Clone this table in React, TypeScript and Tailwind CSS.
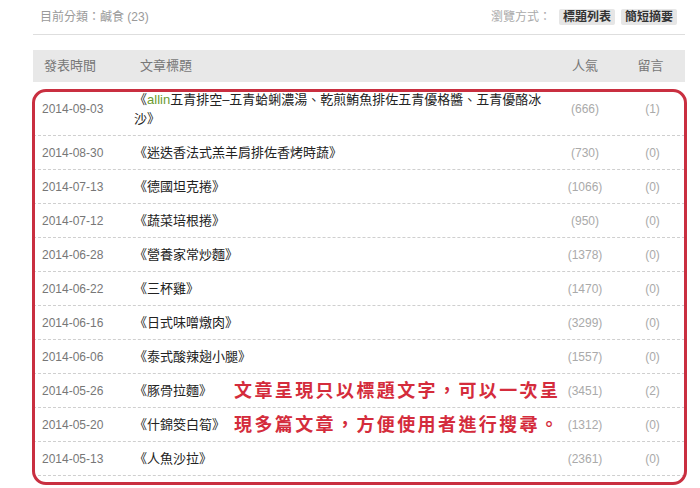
import React from "react";

interface Post {
  date: string;
  title: React.ReactNode;
  views: number;
  comments: number;
}

const posts: Post[] = [
  {
    date: "2014-09-03",
    title: (
      <>
        《<span className="text-[#6b9a2f]">allin</span>五青排空–五青蛤蜊濃湯、乾煎鮪魚排佐五青優格醬、五青優酪冰沙》
      </>
    ),
    views: 666,
    comments: 1,
  },
  { date: "2014-08-30", title: "《迷迭香法式羔羊肩排佐香烤時蔬》", views: 730, comments: 0 },
  { date: "2014-07-13", title: "《德國坦克捲》", views: 1066, comments: 0 },
  { date: "2014-07-12", title: "《蔬菜培根捲》", views: 950, comments: 0 },
  { date: "2014-06-28", title: "《營養家常炒麵》", views: 1378, comments: 0 },
  { date: "2014-06-22", title: "《三杯雞》", views: 1470, comments: 0 },
  { date: "2014-06-16", title: "《日式味噌燉肉》", views: 3299, comments: 0 },
  { date: "2014-06-06", title: "《泰式酸辣翅小腿》", views: 1557, comments: 0 },
  { date: "2014-05-26", title: "《豚骨拉麵》", views: 3451, comments: 2 },
  { date: "2014-05-20", title: "《什錦筊白筍》", views: 1312, comments: 0 },
  { date: "2014-05-13", title: "《人魚沙拉》", views: 2361, comments: 0 },
];

const font = "font-['Liberation_Sans','Noto_Sans_CJK_TC',sans-serif]";

export default function App() {
  return (
    <div className={`w-[700px] h-[488px] bg-white overflow-hidden ${font}`}>
      <div className="ml-[33px] w-[652px]">
        {/* top bar */}
        <div className="h-[35px] flex items-center justify-between border-b border-[#dedede] pl-[7px] pr-[8px]">
          <span className="text-[12px] text-[#9a9a9a]">目前分類：鹹食 (23)</span>
          <div className="flex items-center text-[12px]">
            <span className="text-[#aaa] mr-[8px]">瀏覽方式：</span>
            <span className="bg-[#e6e6e6] text-[#333] px-[4px] leading-[16px] rounded-[2px] font-bold">標題列表</span>
            <span className="bg-[#e6e6e6] text-[#333] px-[4px] leading-[16px] rounded-[2px] font-bold ml-[6px]">簡短摘要</span>
          </div>
        </div>

        {/* table */}
        <div className="relative mt-[15px]">
          <div className="h-[32px] bg-[#e8e8e8] flex items-center text-[13px] text-[#777]">
            <div className="w-[97px] pl-[11px]">發表時間</div>
            <div className="flex-1 pl-[10px]">文章標題</div>
            <div className="w-[70px] text-center">人氣</div>
            <div className="w-[65px] text-center pr-[4px]">留言</div>
          </div>

          {posts.map((p, i) => (
            <div
              key={p.date}
              className={`flex items-center border-b border-dashed border-[#cfcfcf] ${i === 0 ? "h-[54px]" : "h-[34px]"}`}
            >
              <div className="w-[97px] pl-[9px] text-[12px] text-[#777]">{p.date}</div>
              <div className="flex-1 pl-[4px] pr-[4px] text-[13px] leading-[19px] text-[#222]">{p.title}</div>
              <div className="w-[70px] text-center text-[12px] text-[#aaa]">({p.views})</div>
              <div className="w-[65px] text-center text-[12px] text-[#aaa]">({p.comments})</div>
            </div>
          ))}

          {/* red highlight frame */}
          <div className="absolute left-[-1px] right-[-2px] top-[39px] h-[396px] border-[3px] border-[#c92f40] rounded-[14px] pointer-events-none" />

          {/* annotation */}
          <div className="absolute left-[201px] top-[324px] text-[18px] leading-[34px] font-bold tracking-[2.4px] text-[#d42c3c]">
            <div>文章呈現只以標題文字，可以一次呈</div>
            <div>現多篇文章，方便使用者進行搜尋。</div>
          </div>
        </div>
      </div>
    </div>
  );
}
